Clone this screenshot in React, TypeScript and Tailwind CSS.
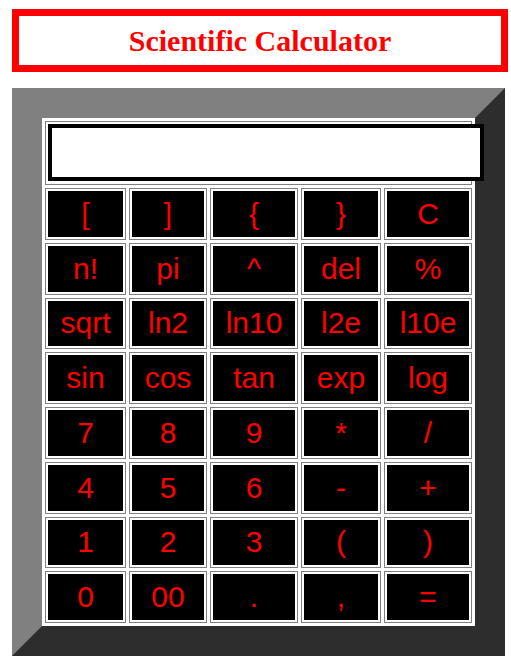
import React from "react";

const keys: string[][] = [
  ["[", "]", "{", "}", "C"],
  ["n!", "pi", "^", "del", "%"],
  ["sqrt", "ln2", "ln10", "l2e", "l10e"],
  ["sin", "cos", "tan", "exp", "log"],
  ["7", "8", "9", "*", "/"],
  ["4", "5", "6", "-", "+"],
  ["1", "2", "3", "(", ")"],
  ["0", "00", ".", ",", "="],
];

export default function App() {
  return (
    <div className="w-[511px] h-[663px] bg-white overflow-hidden">
      <div className="ml-[12px] mt-[9px] w-[496px] h-[63px] border-[7px] border-[#ff0000] flex items-center justify-center">
        <span
          className="text-[30px] font-bold text-[#ff0000] leading-none"
          style={{ fontFamily: '"Liberation Serif", "Times New Roman", serif' }}
        >
          Scientific Calculator
        </span>
      </div>
      <div className="ml-[12px] mt-[16px] w-[493px] h-[568px] border-[30px] border-t-[#808080] border-l-[#808080] border-b-[#2d2d2d] border-r-[#2d2d2d] bg-white p-[3px] flex flex-col gap-[3px]">
        <div className="h-[64px] w-[427px] border border-[#808080] p-[2px]">
          <div className="w-[436px] h-[57px] border-4 border-black bg-white" />
        </div>
        <div
          className="grid grid-cols-[81px_78px_88px_80px_88px] grid-rows-8 gap-[3px] h-[435px] w-[427px]"
          style={{ fontFamily: '"Liberation Sans", Arial, sans-serif' }}
        >
          {keys.flat().map((k, i) => (
            <div key={i} className="border border-[#808080] p-[2px] flex">
              <div className="flex-1 bg-black flex items-center justify-center text-[30px] leading-none text-[#ff0000]">
                {k}
              </div>
            </div>
          ))}
        </div>
      </div>
    </div>
  );
}
